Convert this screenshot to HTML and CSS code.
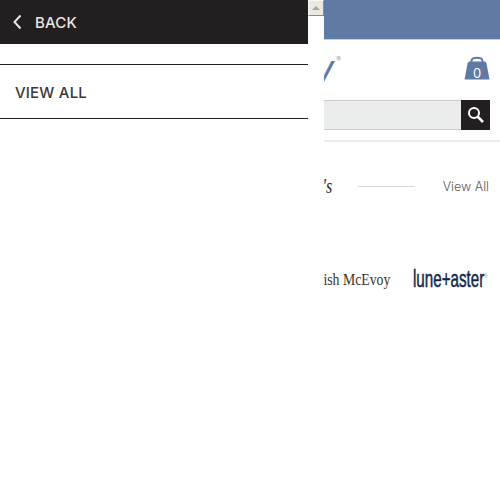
FILE: index.html
```html
<!DOCTYPE html>
<html lang="en">
<head>
    <meta charset="UTF-8">
    <title>Shop menu</title>
    <link rel="stylesheet" href="styles.css">
</head>
<body>
    <!-- Page behind the menu -->
    <main class="page">
        <div class="top-bar"></div>
        <header class="logo-row">
            <div class="logo-box"><span class="logo">Beauty</span><span class="logo-mark">®</span></div>
            <svg class="bag" width="26" height="24" viewBox="0 0 26 24">
                <path d="M7.500 7 V5 C7.500 0.500 18.500 0.500 18.500 5 V7" fill="none" stroke="#5f7ba3" stroke-width="2"/>
                <path d="M5.500 5.500 H20.500 Q22 5.500 22.500 7.500 L25.500 23.500 H0.500 L3.500 7.500 Q4 5.500 5.500 5.500 Z" fill="#5f7ba3"/>
                <text class="bag-count" x="13" y="21.500">0</text>
            </svg>
        </header>
        <div class="search">
            <div class="search-input"></div>
            <div class="search-btn">
                <svg width="18" height="18" viewBox="0 0 18 18">
                    <circle cx="7" cy="7" r="5" fill="none" stroke="#fff" stroke-width="2"/>
                    <path d="M10.500 10.500 L16 16" stroke="#fff" stroke-width="2.500"/>
                </svg>
            </div>
        </div>
        <section class="section-head">
            <div class="section-box"><span class="section-title">Editor's</span></div>
            <div class="section-rule"></div>
            <span class="view-all">View All</span>
        </section>
        <section class="brands">
            <div class="brand-box"><span class="brand-serif">Trish McEvoy</span></div>
            <span class="brand-lune">lune+aster<sup class="brand-mark">®</sup></span>
        </section>
    </main>

    <!-- Slide-out menu, lies over the page -->
    <div class="overlay">
        <nav class="menu">
            <div class="menu-back">
                <svg class="back-icon" width="10" height="16" viewBox="0 0 10 16">
                    <path d="M8.500 1.500 L2.500 8 L8.500 14.500" fill="none" stroke="#e6e6e6" stroke-width="2"/>
                </svg>
                <span>BACK</span>
            </div>
            <div class="menu-item">VIEW ALL</div>
        </nav>
        <div class="scrollbar">
            <div class="scroll-up"><span class="scroll-arrow"></span></div>
        </div>
    </div>
</body>
</html>
```

FILE: styles.css
```css
/* General Page Styling */
body {
    margin: 0;
    height: 500px;
    position: relative;
    background-color: #ffffff;
    font-family: "Inter", "Liberation Sans", sans-serif;
    overflow: hidden;
}

/* Slide-out menu */
.overlay {
    position: absolute;
    top: 0;
    left: 0;
    bottom: 0;
    display: flex;
    background-color: #ffffff;
}

.menu {
    width: 308px;
}

.menu-back {
    height: 44px;
    display: flex;
    align-items: center;
    gap: 13px;
    padding-left: 12px;
    background-color: #231f20;
    color: #e6e6e6;
    font-size: 15px;
    font-weight: 500;
    letter-spacing: 0.2px;
}

.menu-item {
    margin-top: 20px;
    padding: 2px 0 0 15px;
    box-sizing: border-box;
    height: 55px;
    display: flex;
    align-items: center;
    border-top: 1px solid #231f20;
    border-bottom: 1px solid #231f20;
    color: #3a3738;
    font-size: 15px;
    font-weight: 500;
    letter-spacing: 0.2px;
}

/* Scrollbar */
.scrollbar {
    width: 16px;
}

.scroll-up {
    box-sizing: border-box;
    height: 16px;
    display: flex;
    align-items: center;
    justify-content: center;
    background-color: #ece9e0;
    border: 1px solid;
    border-color: #f8f7f3 #8c8a85 #8c8a85 #f8f7f3;
}

.scroll-arrow {
    width: 0;
    height: 0;
    border-left: 4px solid transparent;
    border-right: 4px solid transparent;
    border-bottom: 4px solid #a8a69f;
}

/* Page behind the menu */
.top-bar {
    height: 39px;
    background-color: #5f7ba3;
    border-bottom: 1px solid #c4d0e0;
}

.logo-row {
    height: 60px;
    display: flex;
    align-items: center;
    justify-content: space-between;
    padding-right: 10px;
}

.logo-box {
    width: 341px;
    text-align: right;
    margin-top: -4px;
}

.logo {
    color: #5f7ba3;
    font-style: italic;
    font-size: 36px;
    font-weight: 400;
}

.logo-mark {
    margin-left: 2px;
    color: #8ea3c0;
    font-size: 7px;
    vertical-align: 19px;
}

.bag {
    margin-top: -5px;
}

.bag-count {
    fill: #ffffff;
    font-size: 13px;
    text-anchor: middle;
}

.search {
    height: 30px;
    display: flex;
    padding-right: 10px;
    padding-bottom: 10px;
    border-bottom: 2px solid #ebebeb;
}

.search-input {
    flex: 1;
    background-color: #ebedec;
    border-top: 1px solid #cccccc;
    border-bottom: 1px solid #cccccc;
}

.search-btn {
    width: 29px;
    display: flex;
    align-items: center;
    justify-content: center;
    background-color: #231f20;
}

.section-head {
    margin-top: 33px;
    height: 22px;
    display: flex;
    align-items: center;
    padding-right: 11px;
}

.section-box {
    flex: none;
    width: 332px;
    text-align: right;
}

.section-title {
    display: inline-block;
    color: #231f20;
    font-family: "Liberation Serif", serif;
    font-style: italic;
    font-size: 20px;
    white-space: nowrap;
    transform: scaleX(0.8);
    transform-origin: right center;
}

.section-rule {
    width: 57px;
    height: 1px;
    margin-left: 26px;
    background-color: #d9d9d9;
}

.view-all {
    margin-left: auto;
    color: #5a5a5a;
    font-size: 12.500px;
    font-weight: 300;
}

.brands {
    margin-top: 69px;
    height: 26px;
    display: flex;
    align-items: center;
}

.brand-box {
    flex: none;
    width: 390px;
    text-align: right;
}

.brand-serif {
    display: inline-block;
    color: #333333;
    font-family: "Liberation Serif", serif;
    font-size: 16px;
    white-space: nowrap;
    transform: scaleX(0.86);
    transform-origin: right center;
}

/* scaled down from the left, so the unscaled box may overrun the page */
.brand-lune {
    flex: none;
    margin-left: 23px;
    color: #12284b;
    font-family: "Liberation Sans", sans-serif;
    font-size: 23px;
    white-space: nowrap;
    transform: scaleX(0.66);
    transform-origin: left center;
    -webkit-text-stroke: 0.5px #12284b;
}

.brand-mark {
    font-size: 6px;
    color: #7a8699;
    -webkit-text-stroke: 0;
}
```
